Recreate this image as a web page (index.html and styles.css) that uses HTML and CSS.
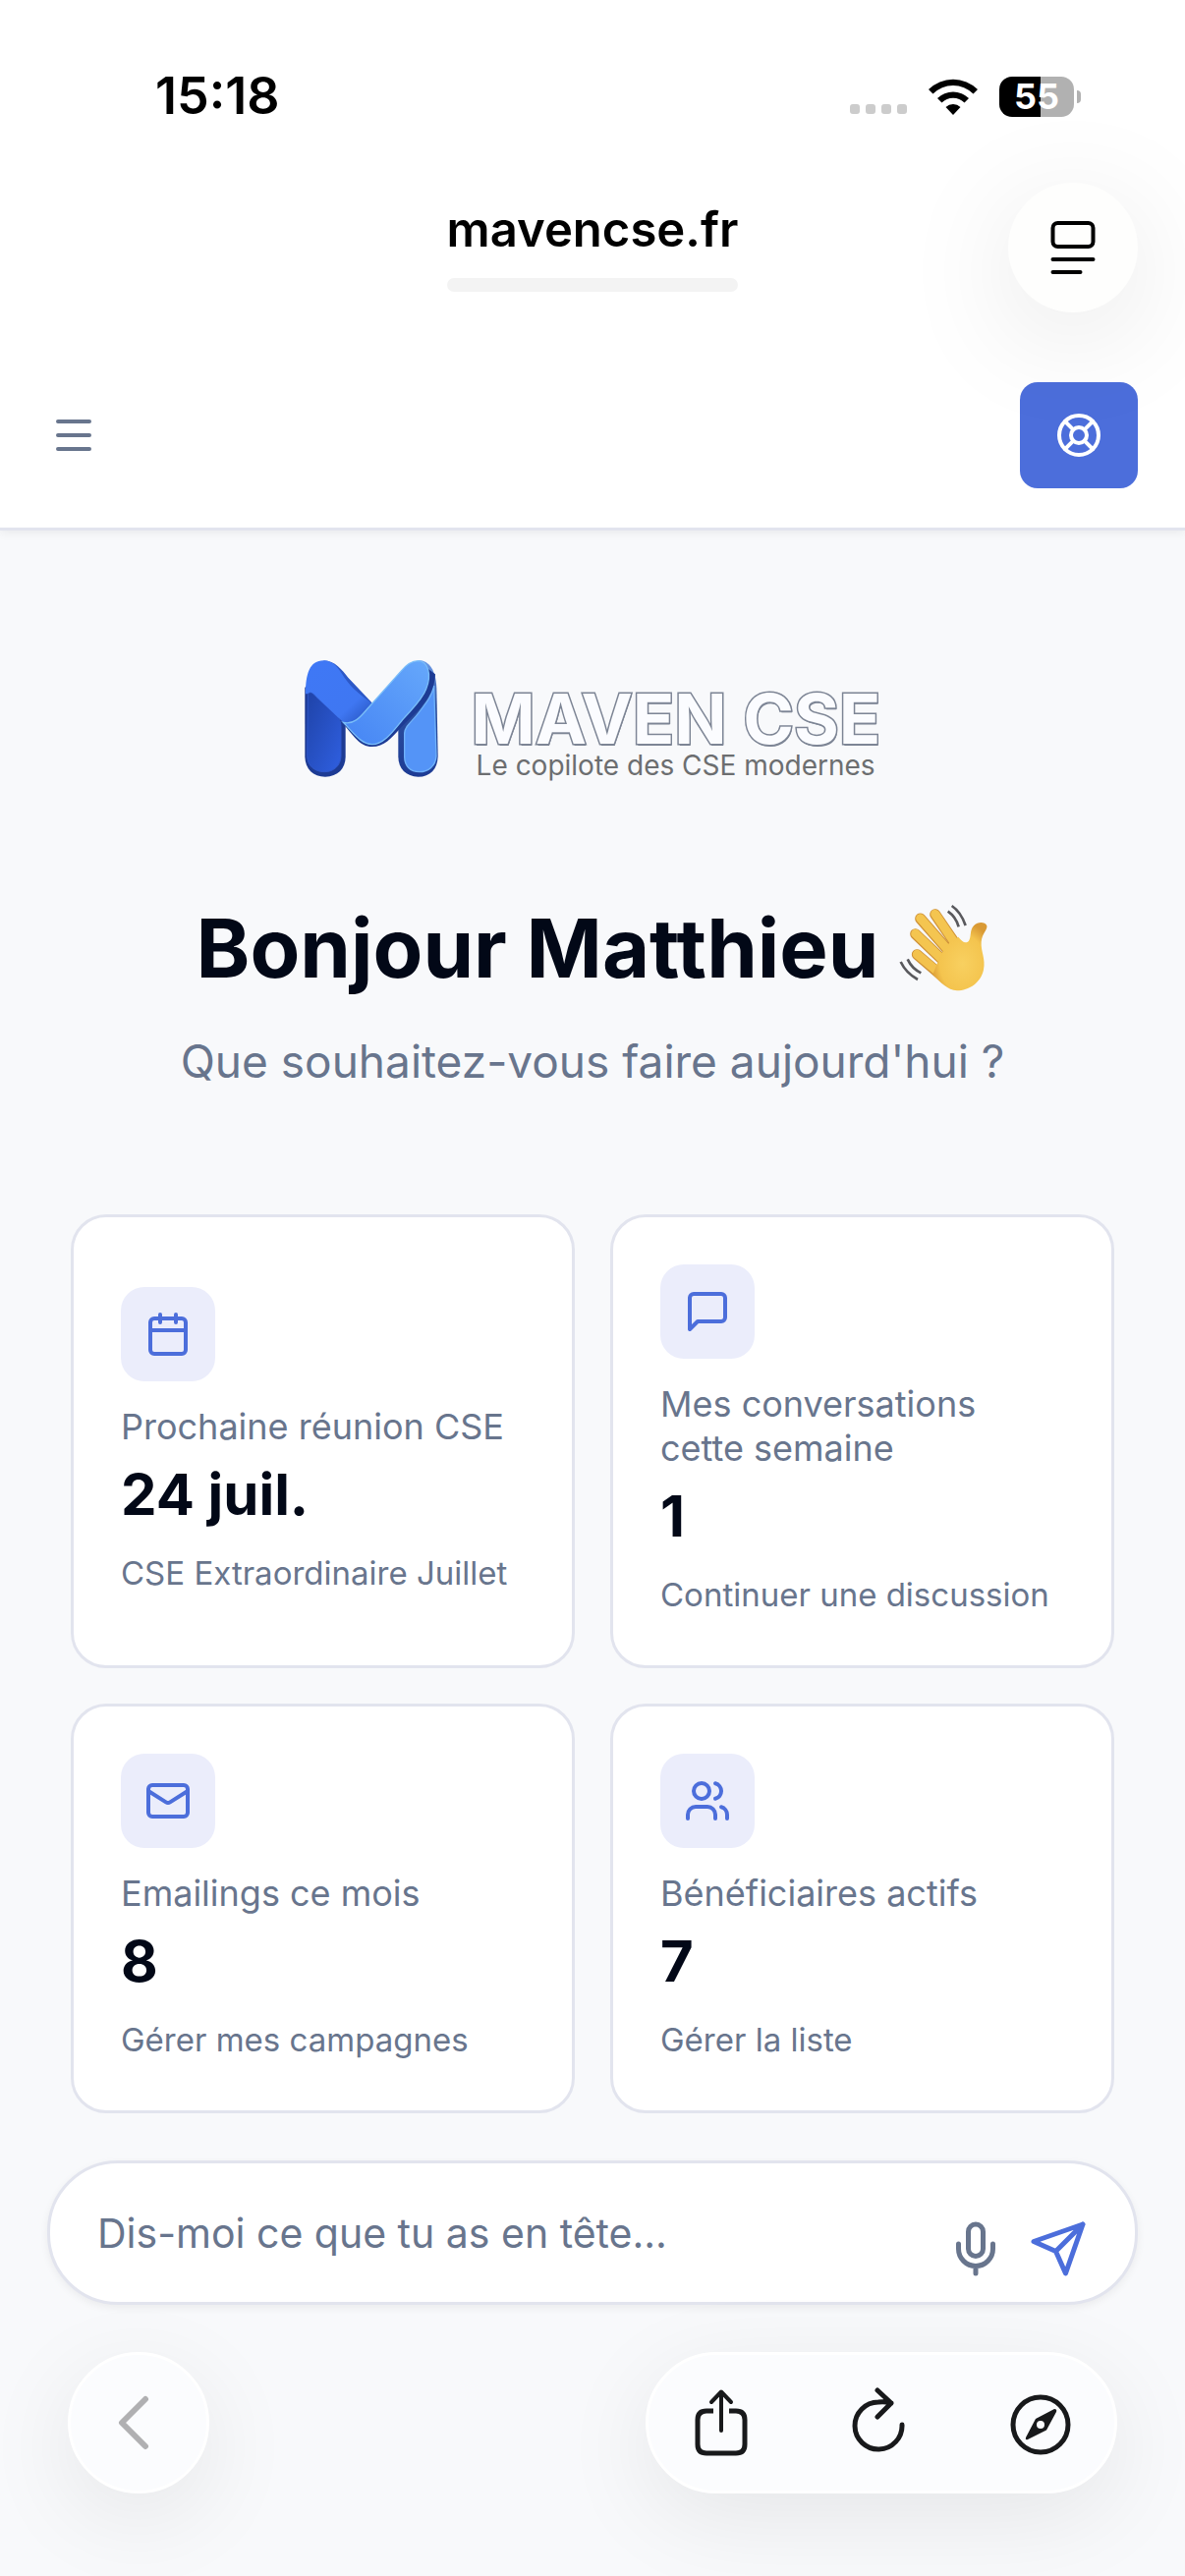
FILE: index.html
```
<!DOCTYPE html>
<html lang="fr">
<head>
  <meta charset="UTF-8" />
  <meta name="viewport" content="width=device-width, initial-scale=1.0" />
  <title>Maven CSE</title>
  <link rel="stylesheet" href="styles.css">
</head>
<body>
  <div class="status-bar">
    <time class="clock">15:18</time>
    <div class="status-icons">
      <div class="signal"><i></i><i></i><i></i><i></i></div>
      <svg class="wifi" viewBox="0 0 50 37" aria-hidden="true">
        <path d="M0 11 A35.500 35.500 0 0 1 50 11 L45.500 15.500 A29 29 0 0 0 4.500 15.500 Z" />
        <path d="M9 20 A23 23 0 0 1 41 20 L36.500 24.500 A16.500 16.500 0 0 0 13.500 24.500 Z" />
        <path d="M17.500 29 A11 11 0 0 1 32.500 29 L25 37 Z" />
      </svg>
      <div class="battery"><span>55</span></div>
    </div>
  </div>

  <div class="browser-bar">
    <div class="address">
      <span>mavencse.fr</span>
      <div class="address-line"></div>
    </div>
    <button class="reader-btn" type="button" aria-label="Options de page">
      <svg viewBox="0 0 46 56" width="46" height="56" fill="none" stroke="#000" stroke-width="4" stroke-linecap="round">
        <rect x="2.500" y="3" width="41" height="24" rx="5" />
        <path d="M2.500 40H43.500M2.500 53H30.500" />
      </svg>
    </button>
  </div>

  <header class="app-header">
    <button class="menu-btn" type="button" aria-label="Menu">
      <svg class="icon" viewBox="0 0 24 24"><path d="M4 5h16M4 12h16M4 19h16" /></svg>
    </button>
    <button class="help-btn" type="button" aria-label="Aide">
      <svg class="icon" viewBox="0 0 24 24">
        <circle cx="12" cy="12" r="10" />
        <path d="m4.930 4.930 4.240 4.240m5.660 0 4.240-4.240m-4.240 9.900 4.240 4.240m-9.900-4.240-4.240 4.240" />
        <circle cx="12" cy="12" r="4" />
      </svg>
    </button>
  </header>

  <main>
    <div class="logo">
      <svg class="logo-mark" viewBox="57 97 408 357" aria-hidden="true">
        <defs>
          <linearGradient id="legLeft" x1="0" y1="0" x2="1" y2="1">
            <stop offset="0" stop-color="#1f43a8" />
            <stop offset="1" stop-color="#2f5fe0" />
          </linearGradient>
          <linearGradient id="bandLeft" x1="0" y1="0" x2="1" y2="1">
            <stop offset="0" stop-color="#3f78f6" />
            <stop offset=".7" stop-color="#3f77f2" />
            <stop offset="1" stop-color="#2450bb" />
          </linearGradient>
          <linearGradient id="bandRight" x1="0" y1="1" x2="1" y2="0">
            <stop offset="0" stop-color="#4584f4" />
            <stop offset="1" stop-color="#66a8fb" />
          </linearGradient>
          <linearGradient id="edge" x1="0" y1="0" x2="0" y2="1">
            <stop offset="0" stop-color="#6c9be8" />
            <stop offset=".4" stop-color="#2c4f9f" />
            <stop offset="1" stop-color="#1d3b94" />
          </linearGradient>
        </defs>
        <path fill="url(#edge)" d="M404 97 C440 98 457 130 460 180 L464 390 C463 430 440 453 404 453 C367 453 343 428 343 392 V290 Z" />
        <path fill="#5494f7" stroke="#6fb2fb" stroke-width="4" d="M452 175 L459 390 C457 420 435 438 407 438 C380 438 362 420 362 392 V320 C364 296 385 285 405 258 C425 230 445 210 452 175 Z" />
        <path fill="#1d3b94" d="M58 180 V392 C59 430 83 453 120 453 C158 453 182 428 182 392 V290 L90 160 Z" />
        <path fill="url(#legLeft)" stroke="#2e57ca" stroke-width="3" d="M67 200 C75 190 84 200 92 209 L150 262 C165 276 168 285 168 303 V390 C167 420 145 438 118 438 C88 438 66 420 65 390 Z" />
        <path fill="#2c58c7" d="M115 98 C150 98 172 128 190 150 L264 228 L205 292 L150 240 Z" />
        <path fill="url(#bandLeft)" d="M115 98 C140 99 155 113 170 137 C192 174 220 199 255 223 L262 230 L215 280 Q200 290 178 290 L92 208 C82 196 74 190 66 200 L60 200 C60 140 72 98 115 98 Z" />
        <path fill="#1d3b94" d="M172 288 C205 325 225 361 263 361 C300 361 322 335 350 303 L408 246 C436 214 454 184 456 140 L430 120 L300 300 Z" />
        <path fill="url(#bandRight)" stroke="#79bdf9" stroke-width="4" d="M175 287 C210 296 232 264 250 244 L350 132 C368 110 385 99 403 99 C434 100 446 140 428 185 C415 220 385 245 355 280 C330 310 300 354 263 354 C228 352 210 322 175 287 Z" />
      </svg>
      <div class="logo-text">
        <strong>MAVEN CSE</strong>
        <span>Le copilote des CSE modernes</span>
      </div>
    </div>

    <h1>
      Bonjour Matthieu
      <svg class="wave" viewBox="84 56 276 276" role="img" aria-label="salut">
        <defs>
          <radialGradient id="skin" cx=".55" cy=".6" r=".6">
            <stop offset="0" stop-color="#f8d060" />
            <stop offset=".7" stop-color="#f4c44e" />
            <stop offset="1" stop-color="#d99a35" />
          </radialGradient>
        </defs>
        <g fill="none" stroke-linecap="round">
          <path stroke="#cf9238" stroke-width="33" d="M142 214 L225 285" />
          <path stroke="#f3c24d" stroke-width="27" d="M142 213 L225 283" />
          <path stroke="#cf9238" stroke-width="33" d="M137 151 L230 240" />
          <path stroke="#f4c550" stroke-width="27" d="M137 150 L230 240" />
          <path stroke="#cf9238" stroke-width="33" d="M152 104 L245 210" />
          <path stroke="#f4c550" stroke-width="27" d="M152 103 L245 210" />
          <path stroke="#cf9238" stroke-width="33" d="M197 91 L265 190" />
          <path stroke="#f4c550" stroke-width="27" d="M197 90 L265 190" />
        </g>
        <path fill="url(#skin)" d="M242 176 L268 160 C280 175 290 182 300 172 C308 160 302 140 315 126 C328 112 350 114 355 126 C358 138 340 150 338 175 C336 205 352 225 345 260 C337 300 300 324 264 324 C235 322 215 300 190 275 L204 240 L218 208 Z" />
        <g fill="none" stroke="#59595d" stroke-width="8">
          <path d="M248 65 Q276 84 290 125M236 82 Q260 98 269 129M92 236 Q108 270 144 290M113 228 Q126 256 154 270" />
        </g>
      </svg>
    </h1>
    <p class="subtitle">Que souhaitez-vous faire aujourd'hui ?</p>

    <div class="cards">
      <a class="card" href="#reunions">
        <span class="card-icon">
          <svg class="icon" viewBox="0 0 24 24"><path d="M8 2v4M16 2v4M3 10h18" /><rect x="3" y="4" width="18" height="18" rx="2" /></svg>
        </span>
        <span class="card-label">Prochaine réunion CSE</span>
        <span class="card-value">24 juil.</span>
        <span class="card-note">CSE Extraordinaire Juillet</span>
      </a>
      <a class="card" href="#conversations">
        <span class="card-icon">
          <svg class="icon" viewBox="0 0 24 24"><path d="M21 15a2 2 0 0 1-2 2H7l-4 4V5a2 2 0 0 1 2-2h14a2 2 0 0 1 2 2z" /></svg>
        </span>
        <span class="card-label">Mes conversations cette semaine</span>
        <span class="card-value">1</span>
        <span class="card-note">Continuer une discussion</span>
      </a>
      <a class="card" href="#emailings">
        <span class="card-icon">
          <svg class="icon" viewBox="0 0 24 24"><rect x="2" y="4" width="20" height="16" rx="2" /><path d="m22 7-8.970 5.700a1.940 1.940 0 0 1-2.060 0L2 7" /></svg>
        </span>
        <span class="card-label">Emailings ce mois</span>
        <span class="card-value">8</span>
        <span class="card-note">Gérer mes campagnes</span>
      </a>
      <a class="card" href="#beneficiaires">
        <span class="card-icon">
          <svg class="icon" viewBox="0 0 24 24"><path d="M16 21v-2a4 4 0 0 0-4-4H6a4 4 0 0 0-4 4v2" /><circle cx="9" cy="7" r="4" /><path d="M22 21v-2a4 4 0 0 0-3-3.870M16 3.130a4 4 0 0 1 0 7.750" /></svg>
        </span>
        <span class="card-label">Bénéficiaires actifs</span>
        <span class="card-value">7</span>
        <span class="card-note">Gérer la liste</span>
      </a>
    </div>
  </main>

  <form class="prompt">
    <input type="text" placeholder="Dis-moi ce que tu as en tête..." aria-label="Votre message" />
    <div class="prompt-actions">
      <button class="mic-btn" type="button" aria-label="Dicter">
        <svg class="icon" viewBox="0 0 24 24"><rect x="9" y="2" width="6" height="13" rx="3" /><path d="M19 10v2a7 7 0 0 1-14 0v-2M12 19v3" /></svg>
      </button>
      <button class="send-btn" type="submit" aria-label="Envoyer">
        <svg class="icon" viewBox="0 0 24 24"><path d="m22 2-7 20-4-9-9-4ZM22 2 11 13" /></svg>
      </button>
    </div>
  </form>

  <nav class="toolbar">
    <button class="back-btn" type="button" aria-label="Retour">
      <svg viewBox="0 0 36 56" width="36" height="56"><path d="M30 4 6 28l24 24" /></svg>
    </button>
    <div class="toolbar-group">
      <button type="button" aria-label="Partager">
        <svg viewBox="0 0 72 72" width="72" height="72">
          <path d="M27 24H20Q11 24 11 33V58Q11 67 20 67H50Q59 67 59 58V33Q59 24 50 24H43" stroke-linecap="butt" />
          <path stroke-width="4" d="M35 44V5M25 15 35 4.500 45 15" />
        </svg>
      </button>
      <button type="button" aria-label="Recharger">
        <svg viewBox="0 0 72 72" width="72" height="72">
          <path d="M57 38A24 24 0 1 1 33 15Q39 14 46 16M32 3 46 16 32 30" />
        </svg>
      </button>
      <button type="button" aria-label="Explorer">
        <svg viewBox="0 0 72 72" width="72" height="72">
          <circle cx="36" cy="38" r="28" />
          <path fill="#18191b" stroke="none" fill-rule="evenodd" d="M50 22Q53 22 52 25L42 43.500 23 53Q20 54 21 51L31 32 50 22ZM40 38a4 4 0 1 0-8 0 4 4 0 1 0 8 0Z" />
        </svg>
      </button>
    </div>
  </nav>
</body>
</html>
```
FILE: styles.css
```
* {
  box-sizing: border-box;
}
body {
  margin: 0;
  min-height: 100vh;
  display: flex;
  flex-direction: column;
  background-color: #f8f9fb;
  color: #020817;
  font-family: Inter, sans-serif;
}
button {
  display: flex;
  align-items: center;
  justify-content: center;
  padding: 0;
  border: none;
  background: none;
  cursor: pointer;
}
.icon {
  width: 48px;
  height: 48px;
  fill: none;
  stroke: currentColor;
  stroke-width: 2;
  stroke-linecap: round;
  stroke-linejoin: round;
}

/* Barre d'état */
.status-bar {
  display: flex;
  justify-content: space-between;
  align-items: center;
  padding: 68px 113px 58px 158px;
  background-color: #fff;
  color: #000;
}
.clock {
  font-size: 52px;
  line-height: 60px;
  font-weight: 600;
}
.status-icons {
  display: flex;
  align-items: center;
  gap: 22px;
}
.signal {
  display: flex;
  gap: 6px;
  padding-top: 26px;
}
.signal i {
  width: 10px;
  height: 10px;
  border-radius: 3px;
  background-color: #ccc;
}
.wifi {
  width: 50px;
  height: 37px;
}
.battery {
  position: relative;
  width: 76px;
  height: 41px;
  border-radius: 13px;
  background: linear-gradient(90deg, #000 55%, #b1b1b1 55%);
  color: #fff;
  font-size: 36px;
  line-height: 41px;
  font-weight: 700;
  text-align: center;
}
.battery::after {
  content: "";
  position: absolute;
  top: 14px;
  right: -7px;
  width: 4px;
  height: 13px;
  border-radius: 0 4px 4px 0;
  background-color: #b1b1b1;
}

/* Barre d'adresse */
.browser-bar {
  position: relative;
  z-index: 2;
  display: grid;
  grid-template-columns: 1fr auto 1fr;
  padding: 0 48px 31px;
  background-color: #fff;
}
.address {
  grid-column: 2;
  padding-top: 18px;
  color: #000;
  font-size: 49px;
  line-height: 60px;
  font-weight: 600;
}
.address-line {
  height: 14px;
  margin-top: 19px;
  border-radius: 7px;
  background-color: #f3f3f3;
}
.reader-btn {
  justify-self: end;
  width: 132px;
  height: 132px;
  border-radius: 50%;
  background-color: #fefefd;
  box-shadow: 0 24px 120px rgba(0, 0, 0, 0.1);
}

/* En-tête de l'application */
.app-header {
  display: flex;
  justify-content: space-between;
  align-items: center;
  padding: 40px 48px;
  border-bottom: 3px solid #e2e4ee;
  background-color: #fff;
  box-shadow: 0 3px 9px rgba(0, 0, 0, 0.06);
}
.menu-btn {
  padding: 0 3px;
  color: #68758d;
}
.help-btn {
  width: 120px;
  height: 108px;
  border-radius: 18px;
  background-color: #4c6edb;
  color: #fff;
}

main {
  padding: 132px 72px 48px;
}
.logo {
  display: flex;
  justify-content: center;
  gap: 34px;
}
.logo-mark {
  width: 136px;
  height: 119px;
}
.logo-text {
  display: flex;
  flex-direction: column;
  padding-top: 27px;
}
.logo-text strong {
  color: #fbfcff;
  font-size: 70px;
  line-height: 66px;
  font-weight: 700;
  -webkit-text-stroke: 3px #7d8595;
  paint-order: stroke fill;
  text-shadow: 1px 2px 0 #7d8595;
}
.logo-text span {
  padding-left: 5px;
  color: #6c6e70;
  font-size: 28px;
  line-height: 28px;
}
h1 {
  display: flex;
  justify-content: center;
  align-items: center;
  gap: 20px;
  margin: 118px 0 0;
  font-size: 83px;
  line-height: 108px;
  font-weight: 700;
}
.wave {
  width: 92px;
  height: 92px;
}
.subtitle {
  margin: 25px 0 120px;
  color: #68758d;
  font-size: 46px;
  line-height: 72px;
  text-align: center;
}

.cards {
  display: grid;
  grid-template-columns: 1fr 1fr;
  gap: 36px;
}
.card {
  display: flex;
  flex-direction: column;
  justify-content: center;
  padding: 48px;
  border: 3px solid #e2e4ee;
  border-radius: 36px;
  background-color: #fff;
  color: #68758d;
  text-decoration: none;
}
.card-icon {
  display: flex;
  align-items: center;
  justify-content: center;
  width: 96px;
  height: 96px;
  margin-bottom: 24px;
  border-radius: 24px;
  background-color: #ebedfb;
  color: #4c6edb;
}
.card-label {
  font-size: 36px;
  line-height: 45px;
}
.card-value {
  margin: 9px 0 18px;
  color: #020817;
  font-size: 58px;
  line-height: 75px;
  font-weight: 700;
}
.card-note {
  font-size: 33px;
  line-height: 48px;
}

.prompt {
  display: flex;
  align-items: center;
  height: 147px;
  margin: 0 48px;
  padding: 0 48px;
  border: 3px solid #e2e4ee;
  border-radius: 72px;
  background-color: #fff;
  box-shadow: 0 3px 9px rgba(0, 0, 0, 0.06);
}
.prompt input {
  flex: 1;
  min-width: 0;
  padding: 0;
  border: none;
  outline: none;
  background: none;
  color: #020817;
  font: 41px/60px Inter, sans-serif;
}
.prompt input::placeholder {
  color: #68758d;
  opacity: 1;
}
.prompt-actions {
  display: flex;
  gap: 24px;
  padding-top: 33px;
}
.prompt-actions .icon {
  width: 60px;
  height: 60px;
}
.mic-btn {
  color: #68758d;
}
.send-btn {
  color: #4c6edb;
}

/* Barre d'outils du navigateur */
.toolbar {
  display: flex;
  justify-content: space-between;
  padding: 48px 69px 84px;
}
.toolbar svg {
  fill: none;
  stroke: #18191b;
  stroke-width: 5;
  stroke-linecap: round;
  stroke-linejoin: round;
}
.back-btn,
.toolbar-group {
  height: 144px;
  border: 3px solid #fff;
  border-radius: 72px;
  background-color: #fbfcfe;
  box-shadow: 0 24px 96px rgba(0, 0, 0, 0.08);
}
.back-btn {
  width: 144px;
  padding-right: 10px;
}
.toolbar .back-btn svg {
  stroke: #b0b0b2;
  stroke-width: 6;
}
.toolbar-group {
  display: flex;
  align-items: center;
  gap: 90px;
  padding: 0 39px;
}
```
